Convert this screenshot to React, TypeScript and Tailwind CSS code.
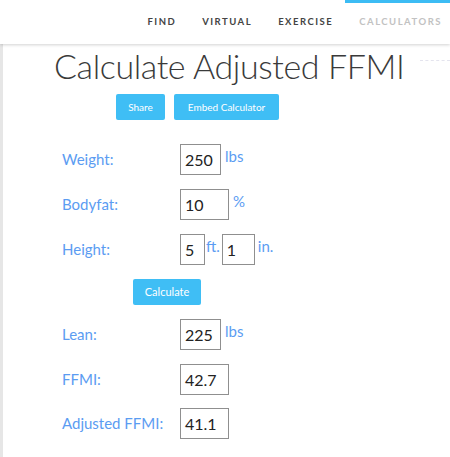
import React from "react";

const label = "text-[15px] text-[#5b9cf2] w-[118px] shrink-0";
const inputCls =
  "h-[31px] border border-[#8f8f8f] bg-white text-[16px] text-[#222] px-[4px] flex items-center";
const unit = "text-[15px] text-[#5b9cf2]";

function Row({ name, value, w, u, mt }: { name: string; value: string; w: string; u?: string; mt: string }) {
  return (
    <div className={`flex items-center ${mt}`}>
      <div className={label}>{name}</div>
      <div className={`${inputCls} ${w}`}>{value}</div>
      {u && <div className={`${unit} ml-[4px] -mt-[6px]`}>{u}</div>}
    </div>
  );
}

export default function App() {
  return (
    <div className="w-[450px] h-[457px] bg-white overflow-hidden relative" style={{ fontFamily: "Lato, 'Open Sans', sans-serif" }}>
      <div className="h-[44px] relative bg-white shadow-[0_1px_3px_rgba(0,0,0,0.18)] z-10">
        <div className="absolute right-0 top-0 w-[105px] h-[3px] bg-[#3cbcf4]" />
        <nav className="flex justify-end items-center h-full pr-[8px] pt-[1px] gap-[26px] text-[9.5px] font-bold tracking-[1.5px]">
          <span className="text-[#444]">FIND</span>
          <span className="text-[#444]">VIRTUAL</span>
          <span className="text-[#444]">EXERCISE</span>
          <span className="text-[#c2c2c2]">CALCULATORS</span>
        </nav>
      </div>
      <div className="flex h-[413px]">
        <div className="w-[3px] bg-[#e6e6e6] shrink-0" />
        <div className="flex-1 relative">
          <div className="absolute right-0 top-[16px] w-[30px] border-t border-dashed border-[#e4e4ee]" />
          <h1
            className="text-[34px] font-light text-[#3a3a3a] leading-none ml-[51px] mt-[5px] tracking-[-0.4px]"
            style={{ fontFamily: "'Lato Light', 'Lato Hairline', Lato, sans-serif" }}
          >
            Calculate Adjusted FFMI
          </h1>
          <div className="flex gap-[9px] ml-[113px] mt-[11px]">
            <div className="h-[26px] w-[49px] rounded-[2px] bg-[#3fbef5] text-white text-[10px] flex items-center justify-center">Share</div>
            <div className="h-[26px] w-[105px] rounded-[2px] bg-[#3fbef5] text-white text-[10px] flex items-center justify-center">Embed Calculator</div>
          </div>
          <div className="ml-[59px]">
            <Row name="Weight:" value="250" w="w-[41px]" u="lbs" mt="mt-[24px]" />
            <Row name="Bodyfat:" value="10" w="w-[49px]" u="%" mt="mt-[14px]" />
            <div className="flex items-center mt-[14px]">
              <div className={label}>Height:</div>
              <div className={`${inputCls} w-[25px]`}>5</div>
              <div className={`${unit} ml-[1px] -mt-[6px]`}>ft.</div>
              <div className={`${inputCls} w-[33px] ml-[2px]`}>1</div>
              <div className={`${unit} ml-[3px] -mt-[6px]`}>in.</div>
            </div>
            <div className="ml-[71px] mt-[14px] h-[26px] w-[68px] rounded-[2px] bg-[#3fbef5] text-white text-[11px] flex items-center justify-center">Calculate</div>
            <Row name="Lean:" value="225" w="w-[41px]" u="lbs" mt="mt-[14px]" />
            <Row name="FFMI:" value="42.7" w="w-[49px]" mt="mt-[14px]" />
            <Row name="Adjusted FFMI:" value="41.1" w="w-[49px]" mt="mt-[13px]" />
          </div>
        </div>
      </div>
    </div>
  );
}
